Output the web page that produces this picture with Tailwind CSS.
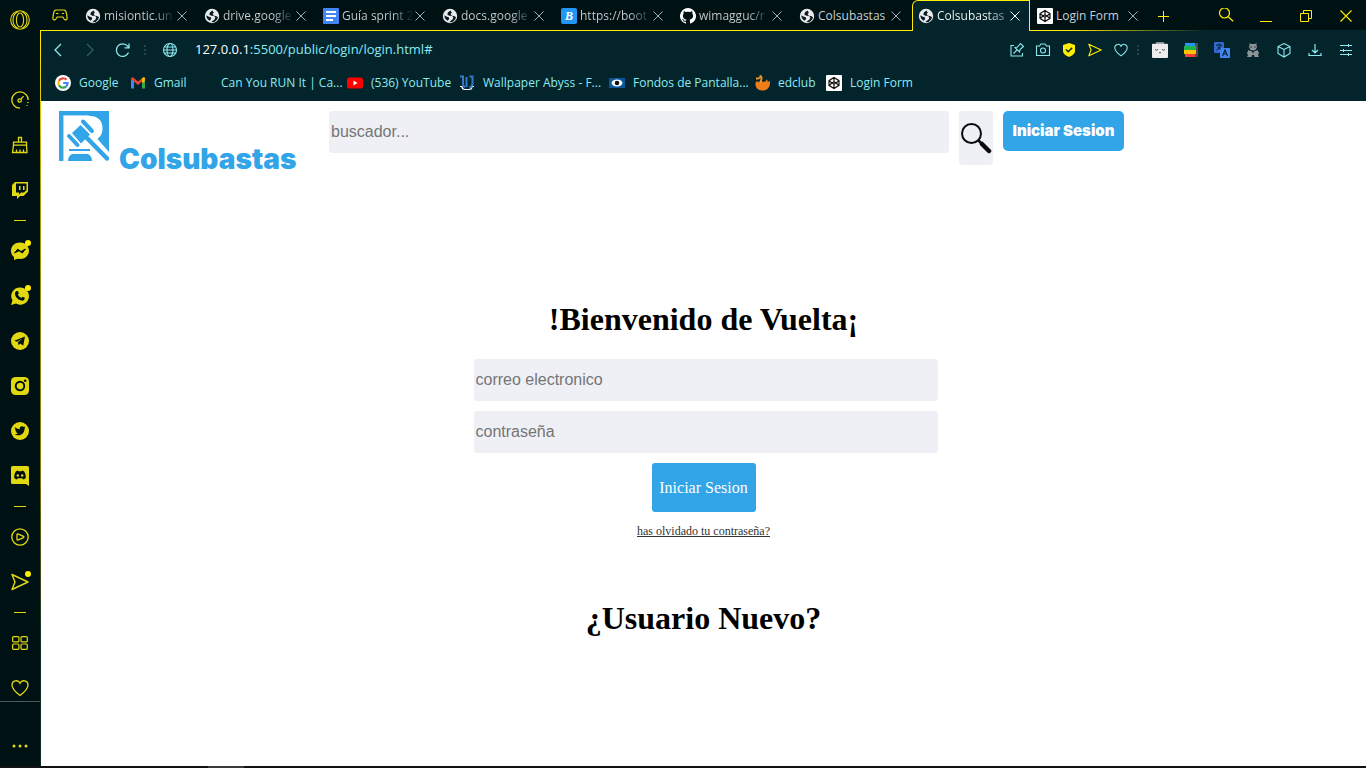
<!DOCTYPE html>
<html lang="es">
<head>
<meta charset="utf-8">
<title>Colsubastas</title>
<script src="https://cdn.jsdelivr.net/npm/@tailwindcss/browser@4"></script>
</head>
<body class="min-h-screen flex flex-col bg-[#111314] font-['Open_Sans',sans-serif]">
<svg class="hidden" aria-hidden="true">
  <symbol id="globe" viewBox="0 0 16 16"><circle cx="8" cy="8" r="7.2" fill="#e8eaed"/><path fill="#0a1a1e" d="M8.6 2.5 6 4.3 5.3 6.5l2 1.3 3 .3 1 1.6-.8 1.9-2 1.3-1.3 1.4 3.4-.4 2.6-2.4.8-2.6-2.2-.9-2-.2L8.6 6l1.2-1.3zM2.3 7.2l2 1.2 2.4.8 .5 1.8-1.6 1.7C3.600 11.600 2.300 9.700 2.300 7.200z"/></symbol>
  <symbol id="x" viewBox="0 0 12 12"><path d="m1.500 1.500 9 9m0-9-9 9" stroke="currentColor" fill="none"/></symbol>
  <symbol id="pen" viewBox="0 0 16 16"><rect width="16" height="16" rx="1" fill="#fff"/><path d="M8 2.500 13 5.700v4.600L8 13.500l-5-3.200V5.700zM3 5.700 8 9.200l5-3.500M3 10.300 8 6.800l5 3.500M8 2.500v4.300M8 9.200v4.300" fill="none" stroke="#111" stroke-width="1.200"/></symbol>
  <symbol id="heart" viewBox="0 0 18 18"><path d="M9 16.500C5 13.500 1 10 1 6a4.200 4.200 0 0 1 8-1.800A4.200 4.200 0 0 1 17 6c0 4-4 7.500-8 10.500z" fill="none" stroke="currentColor" stroke-width="1.300"/></symbol>
  <symbol id="send" viewBox="0 0 18 18"><path d="M1 1.500 17 9 1 16.500 4 9z" fill="none" stroke="currentColor" stroke-width="1.400" stroke-linejoin="round"/></symbol>
</svg>
<div class="flex-1 flex">
  <!-- Sidebar -->
  <nav aria-label="Barra lateral" class="w-10 shrink-0 bg-[#001114] flex flex-col text-[#e2d810]">
    <button aria-label="Opera" class="h-[77px] flex justify-center pt-[10px]"><svg class="size-5" viewBox="0 0 20 20" fill="none" stroke="currentColor" stroke-width="1.100"><circle cx="10" cy="10" r="9.300"/><ellipse cx="10" cy="10" rx="3.600" ry="7"/><path d="M8.500 1.500C4.500 3 3 6.500 3 10s1.500 7 5.500 8.500M11.500 1.500c4 1.500 5.500 5 5.500 8.500s-1.500 7-5.500 8.500"/></svg></button>
    <button aria-label="GX Control" class="h-[45px] grid place-items-center"><svg class="size-[18px]" viewBox="0 0 18 18" fill="none" stroke="currentColor" stroke-width="1.300"><path d="M9 17.200A8.200 8.200 0 1 1 17.200 9"/><path d="M17 11v1m-.8 2v.800" stroke-width="1.500"/><circle cx="8.700" cy="9.500" r="1.700"/><path d="m10 8.200 2.500-3"/></svg></button>
    <button aria-label="GX Cleaner" class="h-[45px] grid place-items-center"><svg class="size-[18px]" viewBox="0 0 18 18" fill="none" stroke="currentColor" stroke-width="1.300"><path d="M7.500 6V1.500h3V6M2.500 6.200h13v3h-13zM2.500 9.200l-1 7.300h14.500l-.5-7.300M5.500 16v-2.500m3.500 2.500v-2.500m3.500 2.500v-2.500"/></svg></button>
    <button aria-label="Twitch" class="h-[45px] grid place-items-center"><svg class="size-[18px]" viewBox="0 0 18 18"><path fill="currentColor" fill-rule="evenodd" d="M4 1h13v9.500L12.500 15H9l-3 3v-3H1V4zm1 1.500v9h3v2l2-2h3l2.500-2.500V2.500z"/><path fill="currentColor" d="M8 5h1.500v4H8zm4 0h1.500v4H12z"/></svg></button>
    <div class="h-4 grid place-items-center"><div class="w-3 h-px bg-current"></div></div>
    <button aria-label="Messenger" class="h-[45px] grid place-items-center relative"><svg class="size-5" viewBox="0 0 20 20"><path fill="currentColor" d="M10 1.500c5 0 9 3.500 9 8.300s-4 8.300-9 8.300l-2.500-.3L4 19v-3C2 14.500 1 12.400 1 9.800 1 5 5 1.500 10 1.500z"/><path d="m4.500 12 3.200-3.800 3.300 2.300L15.500 8l-3.200 4L9 9.700z" fill="#001114" stroke="#001114"/></svg><span class="absolute left-[25px] top-3 size-1.5 rounded-full bg-[#ffee00]"></span></button>
    <button aria-label="WhatsApp" class="h-[45px] grid place-items-center relative"><svg class="size-5" viewBox="0 0 20 20"><path fill="currentColor" d="M10 1.500a8.600 8.600 0 1 1-4 16L1 19l1.500-4.500A8.600 8.600 0 0 1 10 1.500z"/><path fill="#001114" d="m6.500 5 1.500.2.900 2.300-1 1.200c.8 1.500 1.900 2.500 3.400 3.200l1.200-1.200 2.300 1.100c.2 2-1.300 3-3 2.800-3.500-.5-6.300-3.500-6.800-6.400C4.800 6.800 5.500 5.400 6.500 5z"/></svg><span class="absolute left-[25px] top-3 size-1.5 rounded-full bg-[#ffee00]"></span></button>
    <button aria-label="Telegram" class="h-[45px] grid place-items-center"><svg class="size-[18px]" viewBox="0 0 18 18"><circle cx="9" cy="9" r="9" fill="currentColor"/><path fill="#001114" d="M3.300 8.700 14 4.500l-1.800 9.300-3-2.200-1.500 1.600-.8-3 4.500-3.700-5.500 3.300z"/></svg></button>
    <button aria-label="Instagram" class="h-[45px] grid place-items-center"><svg class="size-[18px]" viewBox="0 0 18 18"><rect width="18" height="18" rx="4.500" fill="currentColor"/><circle cx="9" cy="9" r="4.300" fill="none" stroke="#001114" stroke-width="1.900"/><circle cx="14.200" cy="3.800" r="1.300" fill="#001114"/></svg></button>
    <button aria-label="Twitter" class="h-[45px] grid place-items-center"><svg class="size-[18px]" viewBox="0 0 18 18"><circle cx="9" cy="9" r="9" fill="currentColor"/><path fill="#001114" d="M4 5c1.300 1.400 2.800 2.100 4.700 2.200C8.400 5.500 9.500 4.300 11 4.300c.8 0 1.300.3 1.700.7l1.500-.5-.8 1.200 1.300-.3-1.200 1.300c.1 4-2.800 6.500-6 6.500-1.500 0-2.800-.4-3.700-1 1.400.1 2.300-.2 3.200-.9-1-.1-1.700-.6-2-1.500h.9C4.800 9.500 4.200 8.700 4.200 7.600l.9.200C4 7 3.500 6 4 5z"/></svg></button>
    <button aria-label="Discord" class="h-[45px] flex justify-center items-end pb-3"><svg class="h-5 w-[18px]" viewBox="0 0 18 20"><path fill="currentColor" d="M1.500 0h15A1.500 1.500 0 0 1 18 1.500V20l-3-2H1.500A1.500 1.500 0 0 1 0 16.500v-15A1.500 1.500 0 0 1 1.500 0z"/><path fill="#001114" d="m5 5.200 2-.7.500.8h3l.5-.8 2 .7c1.300 2 2 4.500 1.800 6.800-.8.700-1.800 1.200-2.800 1.400l-.8-1.100H6.800L6 13.400c-1-.2-2-.7-2.800-1.400-.2-2.300.5-4.800 1.800-6.800z"/><circle cx="6.800" cy="9.500" r="1.200" fill="currentColor"/><circle cx="11.200" cy="9.500" r="1.200" fill="currentColor"/></svg></button>
    <div class="h-4 grid place-items-center"><div class="w-3 h-px bg-current"></div></div>
    <button aria-label="Reproductor" class="h-[45px] grid place-items-center"><svg class="size-[18px]" viewBox="0 0 18 18" fill="none" stroke="currentColor" stroke-width="1.300"><circle cx="9" cy="9" r="8.200"/><path d="M6 6.500q0-.8.800-.6l5.700 2.400q.8.700 0 1.300l-5.700 2.400q-.8.100-.8-.6z"/></svg></button>
    <button aria-label="Mi Flow" class="h-[45px] grid place-items-center relative"><svg class="size-[18px]"><use href="#send"/></svg><span class="absolute left-[25px] top-3 size-1.5 rounded-full bg-[#ffee00]"></span></button>
    <div class="h-4 grid place-items-center"><div class="w-3 h-px bg-current"></div></div>
    <button aria-label="Marcación rápida" class="h-[45px] grid place-items-center"><svg class="size-4" viewBox="0 0 16 16" fill="none" stroke="currentColor" stroke-width="1.200"><rect x=".6" y="1.600" width="6.300" height="5.300" rx="1"/><rect x="9" y="1.600" width="6.300" height="5.300" rx="1"/><rect x=".6" y="9" width="6.300" height="5.300" rx="1"/><rect x="9" y="9" width="6.300" height="5.300" rx="1"/></svg></button>
    <button aria-label="Favoritos" class="h-9 flex justify-center items-end pb-1"><svg class="size-[18px]"><use href="#heart"/></svg></button>
    <button aria-label="Más" class="flex-1 border-t border-[#4d5a5c] flex justify-center items-end pb-[18px]"><svg class="w-4 h-1" viewBox="0 0 16 4" fill="currentColor"><circle cx="2" cy="2" r="1.500"/><circle cx="8" cy="2" r="1.500"/><circle cx="14" cy="2" r="1.500"/></svg></button>
  </nav>
  <div class="flex-1 min-w-0 flex flex-col bg-[linear-gradient(to_bottom,#ffee00_31px,#a79e0a_25%,#837d0b_60%,#102a25_85%)] pl-px">
    <!-- Tab strip -->
    <header class="h-[31px] -ml-px bg-[#001114] flex text-[12px] text-[#c9cfd0]">
      <div class="w-[39px] shrink-0 border-b border-[#ffee00] grid place-items-center text-[#e2d810]"><svg class="w-4 h-3" viewBox="0 0 16 12" fill="none" stroke="currentColor" stroke-width="1.200"><path d="M4 1h8c1.500 0 2 1 2.400 3l.7 4.500c.3 2.500-1.800 3.200-3 1.500L10.800 8H5.200L3.900 10C2.700 11.700.6 11 .9 8.500L1.600 4C2 2 2.500 1 4 1z"/><path d="M4 4.500h2.500M10 4.500h2"/></svg></div>
      <div class="w-[119px] shrink-0 border-b border-[#ffee00] flex items-center pl-[7px] pt-px"><svg class="size-4 -ml-px mr-[3px]"><use href="#globe"/></svg><a href="#" class="w-[72px] whitespace-nowrap bg-linear-to-r from-[#c9cfd0] from-70% to-[#001114] bg-clip-text text-transparent">misiontic.un</a><button aria-label="Cerrar" class="text-[#a9b0b2]"><svg class="size-3"><use href="#x"/></svg></button></div>
      <div class="w-[119px] shrink-0 border-b border-[#ffee00] flex items-center pl-[7px] pt-px"><svg class="size-4 -ml-px mr-[3px]"><use href="#globe"/></svg><a href="#" class="w-[72px] whitespace-nowrap bg-linear-to-r from-[#c9cfd0] from-70% to-[#001114] bg-clip-text text-transparent">drive.google</a><button aria-label="Cerrar" class="text-[#a9b0b2]"><svg class="size-3"><use href="#x"/></svg></button></div>
      <div class="w-[119px] shrink-0 border-b border-[#ffee00] flex items-center pl-[7px] pt-px"><svg class="size-4 -ml-px mr-[3px]" viewBox="0 0 16 16"><rect width="16" height="16" rx="1" fill="#4285f4"/><path d="M3 4h10M3 8h10M3 12h7" stroke="#fff" stroke-width="1.800"/></svg><a href="#" class="w-[72px] whitespace-nowrap bg-linear-to-r from-[#c9cfd0] from-70% to-[#001114] bg-clip-text text-transparent">Guía sprint 2</a><button aria-label="Cerrar" class="text-[#a9b0b2]"><svg class="size-3"><use href="#x"/></svg></button></div>
      <div class="w-[119px] shrink-0 border-b border-[#ffee00] flex items-center pl-[7px] pt-px"><svg class="size-4 -ml-px mr-[3px]"><use href="#globe"/></svg><a href="#" class="w-[72px] whitespace-nowrap bg-linear-to-r from-[#c9cfd0] from-70% to-[#001114] bg-clip-text text-transparent">docs.google</a><button aria-label="Cerrar" class="text-[#a9b0b2]"><svg class="size-3"><use href="#x"/></svg></button></div>
      <div class="w-[119px] shrink-0 border-b border-[#ffee00] flex items-center pl-[7px] pt-px"><span class="size-4 -ml-px mr-[3px] rounded-xs bg-[#2196f3] text-white font-bold italic text-[12px] leading-4 text-center font-['Liberation_Serif',serif]">B</span><a href="#" class="w-[72px] whitespace-nowrap bg-linear-to-r from-[#c9cfd0] from-70% to-[#001114] bg-clip-text text-transparent">https://boot</a><button aria-label="Cerrar" class="text-[#a9b0b2]"><svg class="size-3"><use href="#x"/></svg></button></div>
      <div class="w-[119px] shrink-0 border-b border-[#ffee00] flex items-center pl-[7px] pt-px"><svg class="size-4 -ml-px mr-[3px]" viewBox="0 0 16 16"><path fill="#fff" d="M8 0a8 8 0 0 0-2.500 15.600c.4.100.5-.2.500-.4v-1.500c-2 .4-2.600-.5-2.700-1-.1-.2-.5-.9-.8-1.100-.3-.1-.7-.5 0-.5.600 0 1.100.6 1.200.8.700 1.200 1.900.9 2.300.7.100-.5.300-.9.500-1.100-1.800-.2-3.600-.9-3.600-4 0-.9.300-1.600.8-2.100-.1-.2-.4-1 .1-2.100 0 0 .700-.2 2.200.8a7.500 7.500 0 0 1 4 0c1.500-1 2.200-.8 2.200-.8.400 1.100.200 1.900.1 2.100.5.600.8 1.300.8 2.100 0 3.100-1.900 3.800-3.700 4 .3.200.6.700.6 1.500v2.200c0 .2.100.5.500.4A8 8 0 0 0 8 0z"/></svg><a href="#" class="w-[72px] whitespace-nowrap bg-linear-to-r from-[#c9cfd0] from-70% to-[#001114] bg-clip-text text-transparent">wimagguc/r</a><button aria-label="Cerrar" class="text-[#a9b0b2]"><svg class="size-3"><use href="#x"/></svg></button></div>
      <div class="w-[119px] shrink-0 border-b border-[#ffee00] flex items-center pl-[7px] pt-px"><svg class="size-4 -ml-px mr-[3px]"><use href="#globe"/></svg><a href="#" class="w-[72px] whitespace-nowrap">Colsubastas</a><button aria-label="Cerrar" class="text-[#a9b0b2]"><svg class="size-3"><use href="#x"/></svg></button></div>
      <div class="w-[118px] shrink-0 border-t border-x border-[#ffee00] rounded-tl-[6px] bg-[#02242a] flex items-center pl-[6px]"><svg class="size-4 -ml-px mr-[3px]"><use href="#globe"/></svg><a href="#" aria-current="page" class="w-[72px] whitespace-nowrap bg-linear-to-r from-white from-70% to-[#5a7074] bg-clip-text text-transparent">Colsubastas</a><button aria-label="Cerrar" class="text-white"><svg class="size-3"><use href="#x"/></svg></button></div>
      <div class="flex-1 flex flex-col">
        <div class="h-[30px] flex items-center pl-[7px] pt-px"><svg class="size-4 mr-[3px]"><use href="#pen"/></svg><a href="#" class="w-[71px] whitespace-nowrap">Login Form</a><button aria-label="Cerrar" class="text-[#a9b0b2]"><svg class="size-3"><use href="#x"/></svg></button>
          <button aria-label="Pestaña nueva" class="ml-[18px] text-[#ffee00]"><svg class="size-3" viewBox="0 0 12 12"><path d="M6.500 1v11M1 6.500h11" stroke="#ffee00"/></svg></button>
          <div class="ml-auto flex items-center gap-6 pr-3 text-[#ffee00]">
            <button aria-label="Buscar pestañas"><svg class="size-4" viewBox="0 0 16 16" fill="none" stroke="currentColor" stroke-width="1.200"><circle cx="6.500" cy="5" r="5"/><path d="m10.200 8.700 5 4.500"/></svg></button>
            <button aria-label="Minimizar"><svg class="size-4" viewBox="0 0 16 16" stroke="currentColor"><path d="M2 13.500h12"/></svg></button>
            <button aria-label="Restaurar"><svg class="size-4" viewBox="0 0 16 16" fill="none" stroke="currentColor"><path d="M2.500 5.500h8v8h-8zM5.500 5.500v-3h8v8h-3"/></svg></button>
            <button aria-label="Cerrar ventana"><svg class="size-4" viewBox="0 0 16 16" stroke="currentColor" stroke-width="1.100"><path d="m2.500 2.500 11 11m0-11-11 11"/></svg></button>
          </div></div>
        <div class="h-px bg-[linear-gradient(to_right,#ffee00_12%,#02242a_52%)]"></div>
      </div>
    </header>
    <!-- Address bar -->
    <div class="h-[38px] bg-[#02242a] flex items-center text-[#8ceaf2]">
      <button aria-label="Atrás" class="ml-[9px]"><svg class="size-4" viewBox="0 0 16 16" fill="none" stroke="currentColor" stroke-width="1.300"><path d="m11 2-6 6 6 6"/></svg></button>
      <button aria-label="Adelante" class="ml-4 text-[#2f5d62]"><svg class="size-4" viewBox="0 0 16 16" fill="none" stroke="currentColor" stroke-width="1.300"><path d="m5 2 6 6-6 6"/></svg></button>
      <button aria-label="Recargar" class="ml-4"><svg class="size-4" viewBox="0 0 16 16" fill="none" stroke="currentColor" stroke-width="1.300"><path d="M14.500 10.500A6.300 6.300 0 1 1 13.600 4.200L14.800 5.500M15 1.500v4.300h-4.500"/></svg></button>
      <span class="ml-3.5 w-px h-2.5 border-l-2 border-dotted border-[#24474c]"></span>
      <button aria-label="Información del sitio" class="ml-4"><svg class="size-4" viewBox="0 0 16 16" fill="none" stroke="currentColor" stroke-width="1.100"><circle cx="8" cy="8" r="6.500"/><ellipse cx="8" cy="8" rx="3" ry="6.500"/><path d="M2.500 5h11M2.500 11h11M1.500 8h13"/></svg></button>
      <a href="#" class="ml-[17px] text-[13px] whitespace-nowrap"><span class="text-white">127.0.0.1</span>:5500/public/login/login.html#</a>
      <div class="ml-auto flex items-center gap-2.5 pr-3">
        <button aria-label="Pinboard"><svg class="size-4" viewBox="0 0 16 16" fill="none" stroke="currentColor" stroke-width="1.100"><path d="M5 3.500H2v10.500h11.500v-3M4.500 11.500 8 8M6 5.500l4.500 4.500.5-2.500 3.500-3L11.500 1.500l-3 3.500z"/></svg></button>
        <button aria-label="Captura"><svg class="size-4" viewBox="0 0 16 16" fill="none" stroke="currentColor" stroke-width="1.100"><path d="M1.500 4h3L6 2h4l1.500 2h3v9.500h-13z"/><circle cx="8" cy="8.500" r="2.500"/></svg></button>
        <button aria-label="Bloqueador" class="text-[#ffee00]"><svg class="size-4" viewBox="0 0 16 16"><path fill="currentColor" d="m8 1 6 2v6c0 3-3.500 5-6 6-2.500-1-6-3-6-6V3z"/><path d="m5 7.500 2.200 2.200 4-4" fill="none" stroke="#02242a" stroke-width="1.500"/></svg></button>
        <button aria-label="Enviar a Flow" class="text-[#ffee00]"><svg class="size-4 p-px"><use href="#send"/></svg></button>
        <button aria-label="Marcar página"><svg class="size-4 p-px"><use href="#heart"/></svg></button>
        <span class="-ml-0.5 w-px h-2.5 border-l-2 border-dotted border-[#24474c]"></span>
        <div class="ml-[3px] flex items-center gap-[15px]">
        <button aria-label="Extensión"><svg class="size-4" viewBox="0 0 16 16"><path fill="#8b9294" d="M4 0h8v3H4z"/><rect y="1.800" width="16" height="14.200" rx="1" fill="#ececec"/><path d="M3 7.500q1.500 1.500 3 0M10 7.500q1.500 1.500 3 0M7 10.500q1 .8 2 0" fill="none" stroke="#555"/></svg></button>
        <button aria-label="Colores"><svg class="size-4" viewBox="0 0 16 16"><path fill="#4d4d4d" d="M10 1h5v14h-5z"/><path fill="#2196f3" d="M2 1h10v3H2z"/><path fill="#22b14c" d="M1 4h12v4H1z"/><path fill="#ffc107" d="M1 8h12v4H1z"/><path fill="#f44336" d="M2 12h10v3H2z"/></svg></button>
        <button aria-label="Traductor"><svg class="size-4" viewBox="0 0 16 16"><rect width="10" height="11" rx="1" fill="#3367d6"/><rect x="6" y="6" width="10" height="10" rx="1" fill="#4285f4"/><path d="M2 3h6M5 1.500V3m2 0Q6 6.500 2.500 8M3.500 4.500 7 7.500" stroke="#02242a" fill="none"/><path d="m8.500 14 2.500-6 2.500 6m-4-2h3" stroke="#02242a" fill="none" stroke-width="1.200"/></svg></button>
        <button aria-label="Incógnito"><svg class="size-4" viewBox="0 0 16 16"><path fill="#8d9496" d="M4.500 1 6 2h4l1.500-1v3l1 1-1 .500C11.500 7.500 10 8.500 8 8.500S4.500 7.500 4.500 5.500l-1-.5 1-1zM3.500 8 7 9.500l1 2 1-2L12.500 8l1.500 3-1 2 1 2h-4.500L9 13H7l-.5 2H2l1-2-1-2z"/><path d="M5.500 5H7m2 0h1.500" stroke="#02242a" stroke-width="1.200"/></svg></button>
        <button aria-label="Extensiones"><svg class="size-4" viewBox="0 0 16 16" fill="none" stroke="currentColor" stroke-width="1.100"><path d="m8 1.500 6 3v7l-6 3.500-6-3.500v-7zM2 4.500l6 3 6-3M8 7.500V15"/></svg></button>
        <button aria-label="Descargas"><svg class="size-4" viewBox="0 0 16 16" fill="none" stroke="currentColor" stroke-width="1.200"><path d="M8 2v9M5 8l3 3 3-3M2 11v2.500h12V11"/></svg></button>
        <button aria-label="Configuración fácil"><svg class="size-4" viewBox="0 0 16 16" fill="none" stroke="currentColor"><path d="M2 3.500h12M2 8.500h12M2 12.500h12M10.500 2v3M5.500 7v3M10.500 11v3"/></svg></button>
        </div>
      </div>
    </div>
    <!-- Bookmarks -->
    <nav aria-label="Marcadores" class="h-8 bg-[#02242a] flex items-center pb-1 pl-3.5 text-[12px] text-[#8ceaf2] whitespace-nowrap">
      <a href="#" class="w-[75px] flex items-center gap-2"><svg class="size-4 shrink-0" viewBox="0 0 16 16"><circle cx="8" cy="8" r="8" fill="#fff"/><g fill="none" stroke-width="2.200"><path d="M11.500 4.800A4.600 4.600 0 0 0 4 5.700" stroke="#ea4335"/><path d="M4 5.700a4.600 4.600 0 0 0 0 4.600" stroke="#fbbc05"/><path d="M4 10.300a4.600 4.600 0 0 0 7 1.300" stroke="#34a853"/><path d="M11 11.600A4.600 4.600 0 0 0 12.600 8H8.200" stroke="#4285f4"/></g></svg>Google</a>
      <a href="#" class="w-[91px] flex items-center gap-2"><svg class="size-4 shrink-0" viewBox="0 0 16 16"><path fill="#4285f4" d="M1 4v9.500h3V6z"/><path fill="#34a853" d="M12 6v7.500h3V4z"/><path fill="#ea4335" d="M1 3.500 2.500 2 8 6.500 13.500 2 15 4l-7 6-7-6z"/><path fill="#fbbc05" d="m12 3.500 2-1.500 1 1v3l-3 2z"/></svg>Gmail</a>
      <a href="#" class="w-[126px]">Can You RUN It | Ca...</a>
      <a href="#" class="w-[112px] flex items-center gap-2"><svg class="size-4 shrink-0" viewBox="0 0 16 16"><rect y="2.500" width="16" height="11" rx="2.500" fill="#f00"/><path fill="#fff" d="m6.500 5.500 4 2.500-4 2.500z"/></svg>(536) YouTube</a>
      <a href="#" class="w-[150px] flex items-center gap-2"><svg class="size-4 shrink-0" viewBox="0 0 16 16"><path d="M1 11.500h2q0 3 3 3h4q3 0 3-3h2" fill="none" stroke="#fff" stroke-width="1.200"/><path d="M1 1.500h3v7q0 3 2 3.500M7.500 2v10M10.500 1.500h3v7q0 3-3 4" fill="none" stroke="#3478c8" stroke-width="2"/></svg>Wallpaper Abyss - F...</a>
      <a href="#" class="w-[145px] flex items-center gap-2"><svg class="size-4 shrink-0" viewBox="0 0 16 16"><path fill="#0b559b" d="M0 3h16v10H0z"/><ellipse cx="8" cy="8" rx="5.500" ry="3.500" fill="#fff"/><circle cx="8" cy="8" r="2.300" fill="#111"/></svg>Fondos de Pantalla...</a>
      <a href="#" class="w-[72px] flex items-center gap-2"><svg class="size-4 shrink-0" viewBox="0 0 16 16"><path fill="#ef7d1a" d="M1.500 9c0-2 1-3 2-2.500L5 7.500c.5-1.500 1.500-2 2.500-2L9 7c2 0 3-1 4-2.500.8.500.8 1.500.5 2.500L16 6c.5 6-2.500 9.500-7.500 9.500S1.500 12.500 1.500 9z"/><path d="M2 3.500h2.500q2-.5 2-2.500 2 1.500.5 4.500L6 8" fill="none" stroke="#f2932a" stroke-width="1.800"/></svg>edclub</a>
      <a href="#" class="flex items-center gap-2"><svg class="size-4 shrink-0"><use href="#pen"/></svg>Login Form</a>
    </nav>
    <!-- Page -->
    <div class="flex-1 bg-white font-['Liberation_Serif',serif] text-black">
      <div class="flex items-start gap-2.5 pl-[18px] pt-2.5 pr-4">
        <svg class="size-[50px] shrink-0" viewBox="0 0 50 50" role="img" aria-label="Logo">
          <rect width="50" height="50" fill="#32a4e8"/>
          <path fill="#fff" d="M5 5h26c9 0 12.500 6 12.500 12 0 5-1.500 8-5 11L50 41v9H5z"/>
          <path d="M4.500 50V4.500H30" fill="none" stroke="#a8d8f6"/>
          <g fill="none" stroke="#32a4e8" stroke-linecap="round"><path d="m24 10.500 9 9.500M10 25l8.500 9" stroke-width="4"/><path d="m27 26 21 21.500" stroke-width="4.500"/></g>
          <path fill="#32a4e8" d="m13 22 8.500-8 9.500 9.500-9 9z"/>
          <path fill="#32a4e8" d="M10 38h21v2H10zM13 43h16q4 2 4 7H9q0-5 4-7z"/>
        </svg>
        <h1 class="w-[200px] shrink-0 pt-7 text-[28px] leading-10 font-black font-[Inter,sans-serif] text-[#32a4e8]">Colsubastas</h1>
        <input type="search" aria-label="buscador" placeholder="buscador..." class="w-[620px] min-w-0 h-[42px] rounded-[3px] bg-[#eff0f5] pl-0.5 text-[16px] font-['Liberation_Sans',sans-serif] placeholder:text-[#757575]">
        <button aria-label="Buscar" class="w-[34px] shrink-0 h-[54px] rounded-[3px] bg-[#eff0f5] grid place-items-center"><svg class="size-8" viewBox="0 0 32 32" fill="none" stroke="#0a0a0a"><circle cx="11.500" cy="11.500" r="9.500" stroke-width="2"/><path d="m18 18 4 4" stroke-width="2.500"/><path d="m22 22 7 7" stroke-width="4.500" stroke-linecap="round"/></svg></button>
        <button class="w-[121px] shrink-0 h-10 rounded-[5px] bg-[#32a4e8] text-white text-[15px] font-black font-[Inter,sans-serif] whitespace-nowrap">Iniciar Sesion</button>
      </div>
      <main class="flex flex-col items-center pt-[122px]">
        <h2 class="text-[32px] leading-9 font-bold">!Bienvenido de Vuelta¡</h2>
        <form class="w-full flex flex-col items-center gap-2.5 pt-[22px]">
          <input type="email" aria-label="correo electronico" placeholder="correo electronico" class="w-[464px] max-w-full ml-1 h-[42px] rounded-[3px] bg-[#eff0f5] pl-0.5 text-[16px] font-['Liberation_Sans',sans-serif] placeholder:text-[#757575]">
          <input type="password" aria-label="contraseña" placeholder="contraseña" class="w-[464px] max-w-full ml-1 h-[42px] rounded-[3px] bg-[#eff0f5] pl-0.5 text-[16px] font-['Liberation_Sans',sans-serif] placeholder:text-[#757575]">
          <button class="w-[104px] h-[49px] rounded-[3px] bg-[#32a4e8] text-white text-[16px]">Iniciar Sesion</button>
          <a href="#" class="text-[12px] leading-[18px] underline text-[#333]">has olvidado tu contraseña?</a>
        </form>
        <h2 class="pt-[60px] text-[32px] leading-9 font-bold">¿Usuario Nuevo?</h2>
      </main>
    </div>
  </div>
</div>
<div class="h-0.5 pl-[208px]"><div class="w-9 h-0.5 bg-[#3a3b3c]"></div></div>
</body>
</html>
